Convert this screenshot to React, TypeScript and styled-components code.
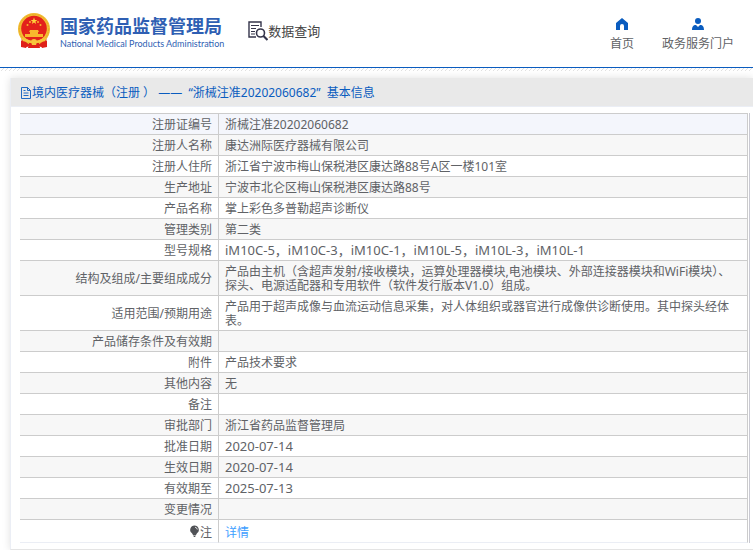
import React from 'react';
import styled, { createGlobalStyle } from 'styled-components';

const BLUE = '#0a5cbf';
const FONT = '"Noto Sans", "Noto Sans CJK SC", sans-serif';

const GlobalStyle = createGlobalStyle`
  * { box-sizing: border-box; }
  body {
    margin: 0;
    background: #fff;
    color: #606266;
    font: 12px/14px ${FONT};
    overflow-x: hidden;
  }
`;

const Header = styled.header`
  display: flex;
  align-items: flex-start;
  height: 68px;
  padding: 0 19px 0 17px;
  border-bottom: 1px solid ${BLUE};
`;

const Hatch = styled.div`
  height: 3px;
  margin-bottom: 7px;
  background: linear-gradient(135deg, #fff 0 40%, #e2e2e2 40% 60%, #fff 60%) 0 0 / 4px 4px;
`;

const Brand = styled.a`
  display: flex;
  gap: 9px;
  padding-top: 12px;
  color: #2f5fb3;
  text-decoration: none;
`;

const BrandText = styled.div`
  display: flex;
  flex-direction: column;
  padding-top: 2px;
  white-space: nowrap;
`;

const BrandName = styled.strong`
  font: 700 18px/22px "Noto Sans CJK SC", sans-serif;
`;

const BrandSub = styled.span`
  font: 400 9px/16px Lato, sans-serif;
`;

const Section = styled.h1`
  display: flex;
  align-items: center;
  margin: 20px 0 0 24px;
  color: #444;
  font: 400 13px/22px "Noto Sans CJK SC", sans-serif;
  white-space: nowrap;
`;

const Nav = styled.nav`
  display: flex;
  gap: 28px;
  margin-left: auto;
  padding-top: 17px;
`;

const NavLink = styled.a`
  display: flex;
  flex-direction: column;
  align-items: center;
  gap: 6px;
  color: #606266;
  line-height: 14px;
  text-decoration: none;
  white-space: nowrap;
`;

const Panel = styled.main`
  margin-left: 10px;
  padding-bottom: 6px;
  border-left: 1px solid #ebeef5;
  border-bottom: 1px solid #e4e4e4;
  box-shadow: 0 0 8px rgba(0, 0, 0, 0.12);
`;

const PanelTitle = styled.h2`
  display: flex;
  align-items: center;
  height: 29px;
  margin: 0 0 6px;
  padding: 2px 0 0 9px;
  border-bottom: 1px solid #ebeef5;
  background: #e9e9e9;
  color: ${BLUE};
  font: 400 12px/14px ${FONT};
  white-space: pre;
`;

const TableFrame = styled.div`
  margin: 0 3px 0 9px;
  padding-right: 1px;
  border-right: 1px solid #c9c9d2;
`;

const Table = styled.table`
  width: 100%;
  table-layout: fixed;
  border-collapse: separate;
  border-spacing: 0;
  border-top: 1px solid #ccc;
`;

const LabelCol = styled.col`
  width: 199px;
`;

const Row = styled.tr`
  background: #fff;
  &:nth-child(even) { background: #f7f7f7; }
  &:first-child { background: #f4f6fc; }
  &:last-child > * { border-bottom-color: #ebeef5; }
  &:last-child > td { padding-top: 6px; }
`;

const Label = styled.th`
  padding: 4px 6px 2px 0;
  border-right: 1px solid #ccc;
  border-bottom: 1px solid #ccc;
  font-weight: 400;
  text-align: right;
`;

const Value = styled.td<{ $code?: boolean }>`
  height: 21px;
  padding: ${({ $code }) => ($code ? '3px 6px' : '4px 6px 2px')};
  border-right: 1px solid #ccc;
  border-bottom: 1px solid #ccc;
  font-size: ${({ $code }) => ($code ? 13 : 12)}px;
`;

const DetailLink = styled.a`
  color: #409eff;
  text-decoration: none;
`;

const Emblem = () => (
  <svg width="34" height="37" viewBox="0 0 34 37" aria-hidden="true">
    <path d="M5 23 4 34l6 1 7-3 7 3 6-1-1-11z" fill="#df2018" />
    <circle cx="17" cy="17" r="16" fill="#f3bd32" />
    <circle cx="17" cy="17" r="14.6" fill="none" stroke="#e6ab28" strokeDasharray="2 1" />
    <circle cx="17" cy="16.5" r="12.8" fill="#e3211b" />
    <path d="m17 5.5.9 2.4h2.5l-2 1.5.8 2.5-2.2-1.5-2.2 1.5.8-2.5-2-1.5h2.5z" fill="#ffd33c" />
    <g fill="#f8b72d">
      <circle cx="10.5" cy="13" r="1" /><circle cx="23.5" cy="13" r="1" />
      <circle cx="13" cy="10" r="1" /><circle cx="21" cy="10" r="1" />
      <path d="M13 18h8l1 2h-1v2h5v3H8v-3h5v-2h-1z" />
    </g>
    <path d="M5 26c5 0 6 3 12 3s7-3 12-3l-1 4c-4-1-6 1-11 1s-7-2-11-1z" fill="#f7c43b" />
    <path d="M4 29q5 0 7 3l-2 4-5-1zm26 0q-5 0-7 3l2 4 5-1z" fill="#df2018" />
    <path d="M12 31h10l1 5H11z" fill="#df2018" />
    <path d="M14 30a3 3 0 0 1 6 0l-1 3h-4z" fill="#f7c43b" />
  </svg>
);

const SearchDoc = () => (
  <svg width="20" height="20" viewBox="0 0 20 20" fill="none" stroke="#34344a" aria-hidden="true">
    <path d="M13 6V1H1v15h7" strokeWidth="1.4" />
    <path d="M3 4.5h8M3 7.5h5M3 10.5h4M3 13h4" strokeWidth="1.1" />
    <circle cx="12.5" cy="12" r="4" strokeWidth="1.6" />
    <path d="m15.5 15 4 4" strokeWidth="2.2" />
  </svg>
);

const HomeIcon = () => (
  <svg width="14" height="14" viewBox="0 0 14 14" fill={BLUE} aria-hidden="true">
    <path d="m7 1 6 5v7H9V9a2 2 0 0 0-4 0v4H1V6z" />
  </svg>
);

const UserIcon = () => (
  <svg width="14" height="14" viewBox="0 0 14 14" fill={BLUE} aria-hidden="true">
    <circle cx="7" cy="4" r="3" />
    <path d="M1 13c0-3 1-5 4-5l2 2 2-2c3 0 4 2 4 5z" />
  </svg>
);

const FileIcon = () => (
  <svg width="12" height="12" viewBox="0 0 12 12" fill="none" stroke={BLUE} aria-hidden="true">
    <path d="M1.5 .5h6l3 3v8h-9zM7.5 .5v3h3M3.5 3.5h2M3.5 6h5M3.5 8.5h5" strokeWidth=".9" />
  </svg>
);

const BulbIcon = () => (
  <svg width="11" height="12" viewBox="0 0 11 12" aria-hidden="true">
    <path d="M5.5 .5a4.3 4.3 0 0 0-2.5 7.8L4 10h3l1-1.7A4.3 4.3 0 0 0 5.5 .5zM4 10.5h3l-1 1.5H5z" fill="#505256" />
    <path d="M6 2.2q2 .3 2.3 2.3" fill="none" stroke="#fff" strokeWidth=".8" />
  </svg>
);

const fields: { label: string; value: string; code?: boolean }[] = [
  { label: '注册证编号', value: '浙械注准20202060682' },
  { label: '注册人名称', value: '康达洲际医疗器械有限公司' },
  { label: '注册人住所', value: '浙江省宁波市梅山保税港区康达路88号A区一楼101室' },
  { label: '生产地址', value: '宁波市北仑区梅山保税港区康达路88号' },
  { label: '产品名称', value: '掌上彩色多普勒超声诊断仪' },
  { label: '管理类别', value: '第二类' },
  { label: '型号规格', value: 'iM10C-5，iM10C-3，iM10C-1，iM10L-5，iM10L-3，iM10L-1', code: true },
  { label: '结构及组成/主要组成成分', value: '产品由主机（含超声发射/接收模块，运算处理器模块,电池模块、外部连接器模块和WiFi模块）、探头、电源适配器和专用软件（软件发行版本V1.0）组成。' },
  { label: '适用范围/预期用途', value: '产品用于超声成像与血流运动信息采集，对人体组织或器官进行成像供诊断使用。其中探头经体表。' },
  { label: '产品储存条件及有效期', value: '' },
  { label: '附件', value: '产品技术要求' },
  { label: '其他内容', value: '无' },
  { label: '备注', value: '' },
  { label: '审批部门', value: '浙江省药品监督管理局' },
  { label: '批准日期', value: '2020-07-14', code: true },
  { label: '生效日期', value: '2020-07-14', code: true },
  { label: '有效期至', value: '2025-07-13', code: true },
  { label: '变更情况', value: '' },
];

export default function App() {
  return (
    <>
      <GlobalStyle />
      <Header>
        <Brand href="#">
          <Emblem />
          <BrandText>
            <BrandName>国家药品监督管理局</BrandName>
            <BrandSub>National Medical Products Administration</BrandSub>
          </BrandText>
        </Brand>
        <Section><SearchDoc />数据查询</Section>
        <Nav>
          <NavLink href="#"><HomeIcon />首页</NavLink>
          <NavLink href="#"><UserIcon />政务服务门户</NavLink>
        </Nav>
      </Header>
      <Hatch />
      <Panel>
        <PanelTitle>
          <FileIcon />
          <span>{'境内医疗器械（注册 ） ——  “浙械注准20202060682”  基本信息'}</span>
        </PanelTitle>
        <TableFrame>
          <Table>
            <colgroup><LabelCol /><col /></colgroup>
            <tbody>
              {fields.map(({ label, value, code }) => (
                <Row key={label}>
                  <Label scope="row">{label}</Label>
                  <Value $code={code}>{value}</Value>
                </Row>
              ))}
              <Row>
                <Label scope="row"><BulbIcon />注</Label>
                <Value><DetailLink href="#">详情</DetailLink></Value>
              </Row>
            </tbody>
          </Table>
        </TableFrame>
      </Panel>
    </>
  );
}
